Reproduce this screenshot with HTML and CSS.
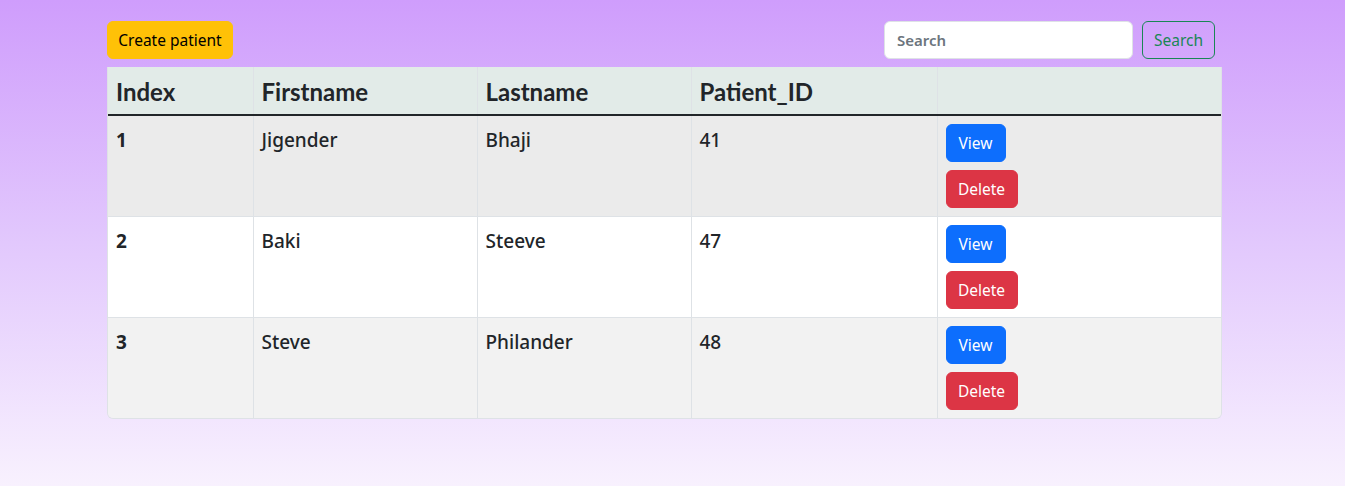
FILE: index.html
```html
<!DOCTYPE html>
<html>
<head>
<meta charset="utf-8">
<link rel="stylesheet" href="styles.css">
</head>
<body>
<div class="page">
  <div class="toolbar">
    <button class="btn btn-warning">Create patient</button>
    <div class="search">
      <input class="search-input" type="text" placeholder="Search">
      <button class="btn btn-outline">Search</button>
    </div>
  </div>
  <div class="table-wrap">
    <table class="table">
      <colgroup>
        <col class="c1"><col class="c2"><col class="c3"><col class="c4"><col>
      </colgroup>
      <thead>
        <tr><th>Index</th><th>Firstname</th><th>Lastname</th><th>Patient_ID</th><th></th></tr>
      </thead>
      <tbody>
        <tr class="row-a"><td class="idx">1</td><td>Jigender</td><td>Bhaji</td><td>41</td><td class="act"><div class="actions"><button class="btn btn-primary">View</button><button class="btn btn-danger">Delete</button></div></td></tr>
        <tr class="row-b"><td class="idx">2</td><td>Baki</td><td>Steeve</td><td>47</td><td class="act"><div class="actions"><button class="btn btn-primary">View</button><button class="btn btn-danger">Delete</button></div></td></tr>
        <tr class="row-c"><td class="idx">3</td><td>Steve</td><td>Philander</td><td>48</td><td class="act"><div class="actions"><button class="btn btn-primary">View</button><button class="btn btn-danger">Delete</button></div></td></tr>
      </tbody>
    </table>
  </div>
</div>
</body>
</html>
```

FILE: styles.css
```css
html, body {
  margin: 0;
  padding: 0;
  height: 100%;
}
body {
  background: linear-gradient(to bottom, #cf9dfc 0%, #e2c8fd 50%, #f8f1fe 100%);
  font-family: "Noto Sans", "Segoe UI", sans-serif;
  color: #212529;
  min-height: 486px;
}
.page {
  width: 1115px;
  margin-left: 107px;
  padding-top: 21px;
}
.toolbar {
  display: flex;
  justify-content: space-between;
  align-items: center;
  margin-right: 7px;
  margin-bottom: 8px;
}
.search {
  display: flex;
  gap: 9px;
}
.btn {
  font-family: "Noto Sans", "Segoe UI", sans-serif;
  font-size: 15.5px;
  height: 38px;
  padding: 2px 0 0;
  border-radius: 6px;
  border: 1px solid transparent;
  line-height: 1;
  white-space: nowrap;
  cursor: pointer;
}
.btn-warning {
  background: #ffc107;
  border-color: #ffc107;
  color: #000;
  width: 126px;
}
.btn-outline {
  background: transparent;
  border-color: #198754;
  color: #198754;
  width: 73px;
}
.btn-primary {
  background: #0d6efd;
  border-color: #0d6efd;
  color: #fff;
  width: 60px;
}
.btn-danger {
  background: #dc3545;
  border-color: #dc3545;
  color: #fff;
  width: 72px;
}
.search-input {
  width: 249px;
  height: 38px;
  box-sizing: border-box;
  border: 1px solid #dee2e6;
  border-radius: 6px;
  padding: 0 12px;
  font-family: "Noto Sans", "Segoe UI", sans-serif;
  font-size: 15px;
  font-weight: 600;
  background: #fff;
  outline: none;
}
.search-input::placeholder {
  color: #6c757d;
}
.table-wrap {
  border: 1px solid #dee2e6;
  border-top: none;
  border-radius: 0 0 6px 6px;
  overflow: hidden;
}
.table {
  width: 100%;
  border-collapse: collapse;
  table-layout: fixed;
}
.c1 { width: 145px; }
.c2 { width: 224px; }
.c3 { width: 214px; }
.c4 { width: 246px; }
.table th {
  background: #e2ebe8;
  font-family: "Comic Sans MS", "Lato", sans-serif;
  font-weight: 700;
  font-size: 24px;
  text-align: left;
  height: 45px;
  padding: 2px 8px 0;
  line-height: 1;
  border-left: 1px solid #dee2e6;
  border-bottom: 2px solid #212529;
}
.table td {
  vertical-align: top;
  padding: 9px 8px 7px;
  height: 84px;
  font-size: 19px;
  font-weight: 500;
  line-height: 30px;
  border-left: 1px solid #dee2e6;
  border-bottom: 1px solid #dee2e6;
}
.table td.act {
  padding: 8px;
}
.table td.idx {
  font-weight: 700;
}
.table th:first-child, .table td:first-child {
  border-left: none;
}
.table tr:last-child td {
  border-bottom: none;
}
.row-a td { background: #ebebeb; }
.row-b td { background: #ffffff; }
.row-c td { background: #f2f2f2; }
.actions {
  display: flex;
  flex-direction: column;
  align-items: flex-start;
  gap: 8px;
}
```
